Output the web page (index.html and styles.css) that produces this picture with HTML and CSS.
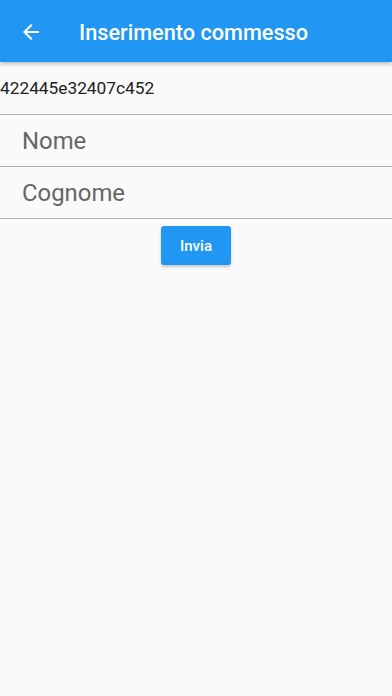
FILE: index.html
```html
<!DOCTYPE html>
<html lang="it">
<head>
  <meta charset="UTF-8">
  <meta name="viewport" content="width=device-width, initial-scale=1.0">
  <title>Inserimento commesso</title>
  <link rel="stylesheet" href="styles.css">
</head>
<body>
  <header class="app-bar">
    <button class="back-btn" aria-label="Indietro">
      <svg width="24" height="24" viewBox="0 0 24 24"><path fill="#fff" d="M20 11H7.83l5.59-5.59L12 4l-8 8 8 8 1.41-1.41L7.83 13H20v-2z"/></svg>
    </button>
    <h1 class="title">Inserimento commesso</h1>
  </header>
  <main class="form">
    <div class="code">422445e32407c452</div>
    <input class="field" type="text" placeholder="Nome">
    <input class="field" type="text" placeholder="Cognome">
    <div class="actions">
      <button class="submit">Invia</button>
    </div>
  </main>
</body>
</html>
```

FILE: styles.css
```css
* {
  margin: 0;
  padding: 0;
  box-sizing: border-box;
}

body {
  font-family: Roboto, "Noto Sans", sans-serif;
  background: #fafafa;
  min-height: 100vh;
}

.app-bar {
  height: 62px;
  background: #2196f3;
  display: flex;
  align-items: center;
  padding-left: 19px;
  padding-top: 2px;
  box-shadow: 0 2px 4px rgba(0, 0, 0, 0.25);
}

.back-btn {
  background: none;
  border: none;
  width: 24px;
  height: 24px;
  display: flex;
}

.title {
  margin-left: 36px;
  color: #fff;
  font-size: 21.7px;
  font-weight: 500;
}

.form {
  display: flex;
  flex-direction: column;
}

.code {
  font-size: 17.3px;
  color: #212121;
  height: 53px;
  padding-top: 16px;
  border-bottom: 1px solid #b0b0b0;
}

.field {
  height: 52px;
  border: none;
  border-bottom: 1px solid #b0b0b0;
  background: transparent;
  font-family: inherit;
  font-size: 23.9px;
  padding: 0 22px;
  color: #212121;
  outline: none;
}

.field::placeholder {
  color: #666;
}

.actions {
  display: flex;
  justify-content: center;
  padding-top: 7px;
}

.submit {
  width: 70px;
  height: 39px;
  background: #2196f3;
  color: #fff;
  border: none;
  border-radius: 3px;
  font-family: inherit;
  font-size: 15px;
  font-weight: 500;
  box-shadow: 0 2px 3px rgba(0, 0, 0, 0.2);
}
```
